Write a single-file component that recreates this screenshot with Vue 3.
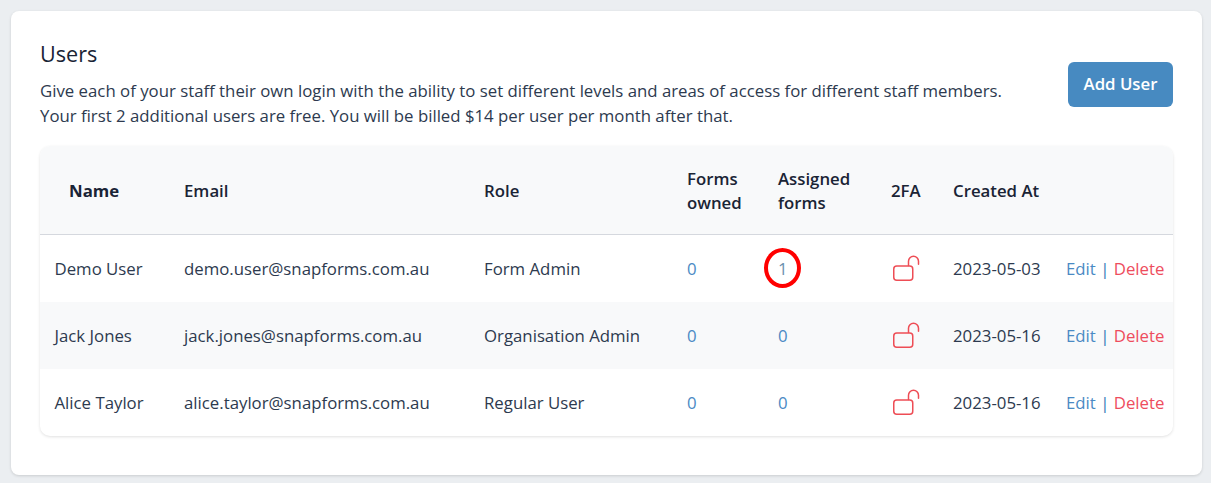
<script setup>
const users = [
  { name: 'Demo User', email: 'demo.user@snapforms.com.au', role: 'Form Admin', owned: 0, assigned: 1, created: '2023-05-03', mark: true },
  { name: 'Jack Jones', email: 'jack.jones@snapforms.com.au', role: 'Organisation Admin', owned: 0, assigned: 0, created: '2023-05-16' },
  { name: 'Alice Taylor', email: 'alice.taylor@snapforms.com.au', role: 'Regular User', owned: 0, assigned: 0, created: '2023-05-16' },
]
</script>

<template>
  <div class="page">
    <section class="card">
      <div class="head">
        <div class="intro">
          <h1>Users</h1>
          <p>Give each of your staff their own login with the ability to set different levels and areas of access for different staff members.<br>Your first 2 additional users are free. You will be billed $14 per user per month after that.</p>
        </div>
        <button class="add">Add User</button>
      </div>
      <div class="table-wrap">
        <table>
          <colgroup>
            <col style="width:129px"><col style="width:300px"><col style="width:203px"><col style="width:91px">
            <col style="width:113px"><col style="width:62px"><col style="width:113px"><col style="width:122px">
          </colgroup>
          <thead>
            <tr>
              <th class="first">Name</th>
              <th>Email</th>
              <th>Role</th>
              <th>Forms owned</th>
              <th>Assigned forms</th>
              <th>2FA</th>
              <th class="nowrap">Created At</th>
              <th></th>
            </tr>
          </thead>
          <tbody>
            <tr v-for="u in users" :key="u.email">
              <td>{{ u.name }}</td>
              <td>{{ u.email }}</td>
              <td>{{ u.role }}</td>
              <td><a>{{ u.owned }}</a></td>
              <td>
                <span class="num"><a :class="{ muted: u.mark }">{{ u.assigned }}</a><i v-if="u.mark" class="ring"></i></span>
              </td>
              <td>
                <svg class="lock" width="29" height="27" viewBox="0 0 29 27" fill="none" stroke="#ee4d55" stroke-width="1.5" stroke-linecap="round">
                  <rect x="1.75" y="11" width="19" height="14.2" rx="3"/>
                  <path d="M16.5 10.5V6.2a5 5 0 0 1 10 0v3"/>
                </svg>
              </td>
              <td>{{ u.created }}</td>
              <td class="actions"><a>Edit</a> <span class="sep">|</span> <a class="del">Delete</a></td>
            </tr>
          </tbody>
        </table>
      </div>
    </section>
  </div>
</template>

<style>
html, body { margin: 0; background: #ebeef1; }
</style>

<style scoped>
.page {
  padding: 11px 9px 8px 11px;
  font-family: "Open Sans", sans-serif;
  font-size: 16.8px;
  color: #2d3a4f;
}
.card {
  background: #fff;
  border-radius: 8px;
  box-shadow: 0 1px 3px rgba(0, 0, 0, 0.14);
  padding: 29px 29px 38px;
  height: 464px;
  box-sizing: border-box;
}
.head {
  display: flex;
  justify-content: space-between;
  align-items: center;
  margin-bottom: 17.5px;
}
.intro { white-space: nowrap; }
h1 {
  margin: 0 0 9.5px;
  font-size: 21.6px;
  font-weight: 400;
  line-height: 28px;
  color: #1a2435;
}
p {
  margin: 0;
  line-height: 25.5px;
}
.add {
  width: 105px;
  height: 45px;
  margin-top: 1px;
  border: 0;
  border-radius: 6px;
  background: #478ac1;
  color: #fff;
  font: 600 16.8px "Open Sans", sans-serif;
  padding: 0 0 2px;
}
.table-wrap {
  border-radius: 10px;
  box-shadow: 0 1px 3px rgba(0, 0, 0, 0.12);
  overflow: hidden;
}
table {
  width: 1133px;
  table-layout: fixed;
  border-collapse: collapse;
}
thead tr {
  height: 88px;
  background: #f8f9fa;
  border-bottom: 1px solid #d5d8de;
}
th {
  text-align: left;
  font-weight: 600;
  line-height: 24px;
  padding: 2px 15px 0;
  color: #1a2435;
}
th.first { padding-left: 29px; font-weight: 700; }
th.nowrap { white-space: nowrap; }
td {
  height: 67px;
  padding: 0 15px;
  white-space: nowrap;
}
td:first-child { padding-left: 14.5px; }
tbody tr:nth-child(even) { background: #f8f9fa; }
a { color: #4a8ac4; }
a.muted { color: #6b8fae; }
.del { color: #ee4d5d; }
.sep { color: #2f79b8; }
.num { position: relative; display: inline-block; }
.ring {
  position: absolute;
  left: 50%;
  top: 50%;
  width: 37px;
  height: 40px;
  margin: -20px 0 0 -18.5px;
  border: 4.5px solid #f00;
  border-radius: 50%;
  box-sizing: border-box;
}
.lock { display: block; margin-left: 1px; }
</style>
